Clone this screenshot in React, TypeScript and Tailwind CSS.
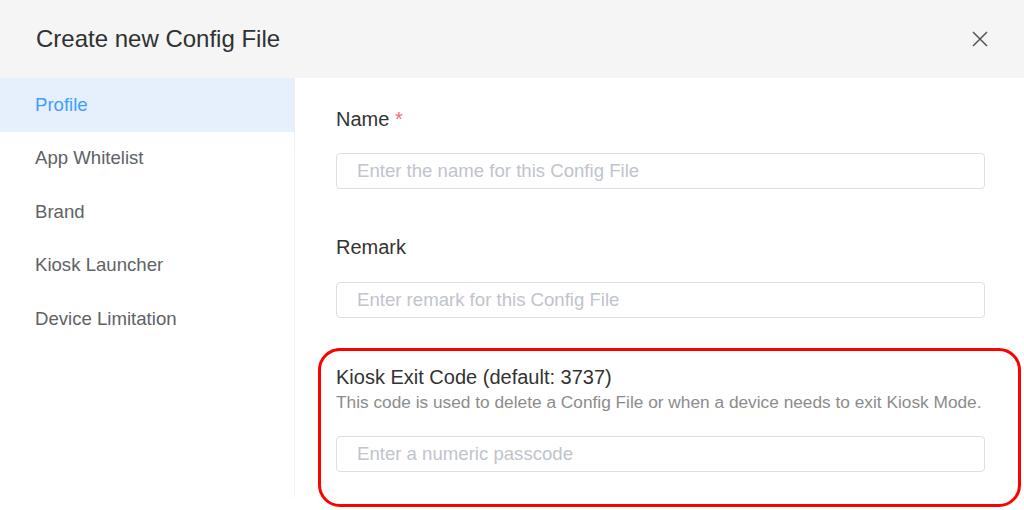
import React from 'react';

const menu = ['Profile', 'App Whitelist', 'Brand', 'Kiosk Launcher', 'Device Limitation'];

const Field: React.FC<{ placeholder: string }> = ({ placeholder }) => (
  <input
    type="text"
    placeholder={placeholder}
    className="w-full h-[36px] px-[20px] rounded-[4px] border border-[#dcdfe6] bg-white text-[18.6px] text-[#606266] placeholder:text-[#c0c4cc] outline-none"
  />
);

const App: React.FC = () => {
  return (
    <div className="w-[1024px] h-[510px] overflow-hidden bg-white font-['Liberation_Sans',Arial,sans-serif]">
      {/* Header */}
      <div className="h-[78px] bg-[#f5f5f5] flex items-center justify-between pl-[36px] pr-[35px]">
        <h2 className="text-[24px] leading-none text-[#303133]">Create new Config File</h2>
        <button className="text-[#555] w-[18px] h-[18px] flex items-center justify-center">
          <svg width="16" height="16" viewBox="0 0 16 16" fill="none" stroke="currentColor" strokeWidth="1.5">
            <path d="M1 1 L15 15 M15 1 L1 15" />
          </svg>
        </button>
      </div>

      <div className="flex">
        {/* Sidebar */}
        <div className="w-[295px] h-[419px] border-r border-[#ebeef5] shrink-0">
          {menu.map((item, i) => (
            <div
              key={item}
              className={`h-[53.5px] flex items-center pl-[35px] text-[18.6px] ${
                i === 0 ? 'bg-[#e6effc] text-[#409eff]' : 'text-[#606266]'
              }`}
            >
              {item}
            </div>
          ))}
        </div>

        {/* Form */}
        <div className="flex-1 pl-[23px] pr-[3px] pt-[30px]">
          <div className="pl-[18px] pr-[36px]">
            <label className="block text-[20px] leading-[22px] text-[#333333]">
              Name <span className="text-[#f56c6c]">*</span>
            </label>
            <div className="mt-[23px]">
              <Field placeholder="Enter the name for this Config File" />
            </div>

            <label className="block mt-[47px] text-[20px] leading-[22px] text-[#333333]">Remark</label>
            <div className="mt-[24px]">
              <Field placeholder="Enter remark for this Config File" />
            </div>
          </div>

          <div className="mt-[30px] border-[3px] border-[#ff0000] rounded-[22px] pl-[15px] pr-[33px] pt-[15px] pb-[32px]">
            <label className="block text-[20px] leading-[22px] text-[#333333]">Kiosk Exit Code (default: 3737)</label>
            <p className="mt-[4px] text-[17.3px] leading-[20px] text-[#8c8c8c]">
              This code is used to delete a Config File or when a device needs to exit Kiosk Mode.
            </p>
            <div className="mt-[24px]">
              <Field placeholder="Enter a numeric passcode" />
            </div>
          </div>
        </div>
      </div>
    </div>
  );
};

export default App;
